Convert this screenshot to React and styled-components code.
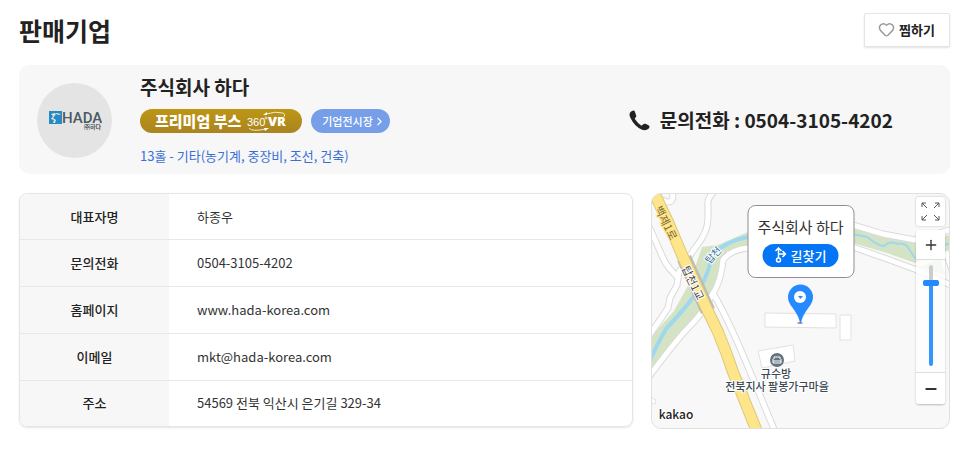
import React, { useState } from "react";
import styled, { createGlobalStyle } from "styled-components";
import { Heart, ChevronRight, Plus, Minus } from "lucide-react";

const GlobalStyle = createGlobalStyle`
   * {
      box-sizing: border-box;
   }
   body {
      margin: 0;
      background: #fff;
      color: #222;
      font-family: "Noto Sans CJK KR", "Noto Sans", sans-serif;
      font-size: 13px;
      line-height: 20px;
   }
   button {
      font-family: inherit;
      cursor: pointer;
   }
   a {
      text-decoration: none;
   }
`;

const Page = styled.main`
   padding: 13px 16px 20px 19px;
`;

const Header = styled.header`
   display: flex;
   align-items: flex-start;
   justify-content: space-between;
   margin-bottom: 18px;
`;

const Title = styled.h1`
   margin: 0;
   font-size: 25px;
   font-weight: 700;
   line-height: 34px;
`;

const WishButton = styled.button`
   display: flex;
   align-items: center;
   gap: 4px;
   height: 34px;
   padding: 0 14px 1px 13px;
   border: 1px solid #e5e5e5;
   border-radius: 2px;
   background: #fff;
   box-shadow: 0 1px 2px rgba(0, 0, 0, 0.12);
   color: #222;
   font-size: 13px;
   font-weight: 700;
`;

const CompanyCard = styled.section`
   display: flex;
   align-items: center;
   gap: 28px;
   padding: 8px 57px 7px 18px;
   margin-bottom: 19px;
   border-radius: 10px;
   background: #f7f7f7;
`;

const LogoCircle = styled.div`
   display: flex;
   align-items: center;
   justify-content: center;
   width: 75px;
   height: 75px;
   border-radius: 50%;
   background: #e4e4e4;
`;

const CompanyInfo = styled.div`
   flex: 1;
`;

const CompanyName = styled.h2`
   margin: 0 0 8px;
   font-size: 19px;
   font-weight: 700;
   line-height: 28px;
`;

const Badges = styled.div`
   display: flex;
   gap: 9px;
   margin-bottom: 12px;
`;

const Badge = styled.a`
   display: flex;
   align-items: center;
   height: 24px;
   border-radius: 12px;
   color: #fff;
`;

const PremiumBadge = styled(Badge)`
   gap: 6px;
   padding: 0 15px;
   background: linear-gradient(#bd9614, #aa8420);
   font-size: 15px;
   font-weight: 900;
`;

const HallBadge = styled(Badge)`
   padding: 0 4px 0 11px;
   background: #779fe9;
   font-size: 11px;
   font-weight: 500;
`;

const Category = styled.p`
   margin: 0;
   color: #3a70d6;
   line-height: 22px;
`;

const Phone = styled.a`
   display: flex;
   align-items: center;
   gap: 10px;
   color: #222;
   font-size: 19px;
   font-weight: 700;
   white-space: nowrap;
`;

const Details = styled.div`
   display: grid;
   grid-template-columns: 614fr 299fr;
   gap: 18px;
   align-items: start;
`;

const TableBox = styled.div`
   overflow: hidden;
   border: 1px solid #e5e5e5;
   border-radius: 8px;
   box-shadow: 0 1px 2px rgba(0, 0, 0, 0.1);
`;

const InfoTable = styled.table`
   width: 100%;
   height: 232px;
   border-collapse: collapse;

   tr + tr {
      border-top: 1px solid #e8e8e8;
   }
`;

const Label = styled.th`
   width: 149px;
   padding: 0;
   background: #f7f7f7;
   font-weight: 500;
`;

const Value = styled.td`
   padding: 0 28px;
   color: #333;
`;

const MapBox = styled.div`
   position: relative;
   height: 236px;
   overflow: hidden;
   border: 1px solid #e0e0e0;
   border-radius: 10px;
   background: #f8f8f8;
`;

const MapCanvas = styled.svg`
   display: block;
   width: 100%;
   height: 100%;
`;

const Popup = styled.div`
   position: absolute;
   top: 11px;
   left: 50%;
   transform: translateX(-50%);
   display: flex;
   flex-direction: column;
   align-items: center;
   gap: 6px;
   width: 107px;
   padding: 10px 0;
   border: 1px solid #8e8e8e;
   border-radius: 8px;
   background: #fff;
   color: #333;
   font-size: 15px;
   line-height: 22px;
   white-space: nowrap;
`;

const RouteButton = styled.button`
   display: flex;
   align-items: center;
   justify-content: center;
   gap: 4px;
   width: 76px;
   height: 23px;
   padding: 0 0 1px;
   border: 0;
   border-radius: 12px;
   background: #0475f4;
   color: #fff;
   font-size: 13px;
   font-weight: 500;
`;

const Controls = styled.div`
   position: absolute;
   top: 3px;
   right: 4px;
   display: flex;
   flex-direction: column;
   gap: 4px;
   width: 29px;
`;

const ControlButton = styled.button`
   display: flex;
   align-items: center;
   justify-content: center;
   width: 100%;
   height: ${(props) => props.$height || 29}px;
   padding: 0;
   border: 0;
   background: #fff;
   color: #333;
`;

const FullButton = styled(ControlButton)`
   border-radius: 2px;
   box-shadow: 0 0 2px rgba(0, 0, 0, 0.3);
`;

const ZoomPanel = styled.div`
   border-radius: 3px;
   overflow: hidden;
   box-shadow: 0 1px 2px rgba(0, 0, 0, 0.25);
`;

const SliderArea = styled.div`
   display: flex;
   justify-content: center;
   height: 114px;
   padding: 5px 0 6px;
   border-top: 1px solid #ddd;
   border-bottom: 1px solid #ddd;
   background: rgba(255, 255, 255, 0.75);
`;

const ZoomSlider = styled.input`
   appearance: none;
   writing-mode: vertical-lr;
   direction: rtl;
   width: 16px;
   height: 101px;
   margin: 0;
   background: transparent;

   &::-webkit-slider-runnable-track {
      width: 4px;
      border-radius: 2px;
      background: linear-gradient(#ccc 17%, #3396ff 17%);
   }
   &::-webkit-slider-thumb {
      appearance: none;
      width: 16px;
      height: 6px;
      margin-left: -6px;
      border-radius: 2px;
      background: #258aff;
   }
`;

const rows = [
   { label: "대표자명", value: "하종우" },
   { label: "문의전화", value: "0504-3105-4202" },
   { label: "홈페이지", value: "www.hada-korea.com" },
   { label: "이메일", value: "mkt@hada-korea.com" },
   { label: "주소", value: "54569 전북 익산시 은기길 329-34" },
];

const roads = [
   "M60 -4 V0 Q55 5 56 12 V24 C56 40 46 50 43 54 L27 78 L25 91 L18 104 L16 114 L10 123 L-4 143",
   "M-4 30 L11 64 Q16 75 28 85",
   "M20 -4 Q23 9 15 8 L5 4",
   "M96 54 Q78 56 71 66 Q69 88 60 101 Q53 117 37 133 C25 145 14 160 -4 184",
   "M60 98 Q69 111 88 154 L105 194 L124 240",
   "M96 31 L201 31 L231 40 L263 46 L301 35",
   "M201 53 L235 65 L265 76 L301 92",
   "M294 58 L301 79",
];

const highway = "M-3 -12L16 28L31 63L53 111L66 138Q74 157 81 178L106 240";

function HadaLogo() {
   return (
      <svg width="54" height="24" viewBox="0 0 54 24" role="img" aria-label="HADA">
         <path d="M1 3h13v13H1z" fill="#258bc2" />
         <path d="M3 6l4-1 1 1-3 4 3 2-1 3H5l1-3-3-1 2-3zM8 5l5 1-2 1-3-1z" fill="#e4e4e4" />
         <text x="14" y="15" fontSize="15" fontWeight="500" fontFamily="Roboto, sans-serif" fill="#4b5963">
            HADA
         </text>
         <text x="53" y="21" fontSize="6" fontWeight="700" textAnchor="end" fill="#4b5963">
            ㈜하다
         </text>
      </svg>
   );
}

function VrMark() {
   return (
      <svg width="40" height="22" viewBox="0 0 40 22" fill="#fff">
         <text x="0" y="16" fontSize="11" fontWeight="400" fontFamily="'Liberation Sans Narrow', 'Liberation Sans', sans-serif">
            360
         </text>
         <text x="21" y="16" fontSize="13" fontWeight="900" fontFamily="'Open Sans', sans-serif">
            VR
         </text>
         <circle cx="19" cy="8" r="1" fill="none" stroke="#fff" strokeWidth="0.7" />
         <path d="M19 4Q28 1 36 3Q39 4 37 7M2 18Q4 22 19 19" fill="none" stroke="#fff" strokeWidth="0.8" />
         <path d="M16 5l4-3v3zM17 18l5 0-4 3z" />
      </svg>
   );
}

function PhoneIcon() {
   return (
      <svg width="21" height="21" viewBox="0 0 21 21" fill="currentColor">
         <path d="M4.500 .5Q3 .5 1.500 2Q-.5 4 1.500 8Q5.500 16.500 13 19.700Q17 21 19.500 18.700Q21.500 16.500 19.500 15.300L16.500 13.800Q15 13.300 14 14.500L12.500 15.800Q8.500 13.200 5.700 8.800L6.800 7.200Q7.600 6.200 7 5L5.900 1.700Q5.500 .5 4.500 .5Z" />
      </svg>
   );
}

function MapDrawing() {
   return (
      <MapCanvas viewBox="0 0 297 234" preserveAspectRatio="xMidYMid slice">
         <path
            d="M50 53L66 51L96 38V54Q78 55 71 66Q70 85 61 99Q52 116 36 132L-2 176V144L22 117L38 88Z"
            fill="#d3e3c3"
         />
         <path d="M201 34L223 41L263 49L297 41V56L263 69L235 59L201 49Z" fill="#d3e3c3" />
         <path d="M268 73L288 64L293 81Z" fill="#d9e5ce" />
         <path d="M96 43Q74 47 60 61Q57 79 47 96Q32 116 14 135Q8 145 -2 166" fill="none" stroke="#9ed7ee" strokeWidth="4" />
         <path
            d="M201 40L215 43Q228 53 232 52Q238 46 246 50Q253 48 257 55L263 64L275 57L299 49"
            fill="none"
            stroke="#9ed7ee"
            strokeWidth="2"
         />
         {roads.map((d) => (
            <path key={d} d={d} fill="none" stroke="#dadada" strokeWidth="7" />
         ))}
         {roads.map((d) => (
            <path key={d} d={d} fill="none" stroke="#fff" strokeWidth="5" />
         ))}
         <path d="M32 64L56 117" stroke="#bbb" strokeWidth="15" />
         <path d={highway} fill="none" stroke="#dbc878" strokeWidth="12" />
         <path d={highway} fill="none" stroke="#ffe58a" strokeWidth="10" />
         <g fill="#fff" stroke="#e1e1e1">
            <path d="M113 119L184 120V134L113 133Z" />
            <path d="M188 121H199V146H188Z" />
            <path d="M106 157L141 151L143 167L110 174Z" />
            <path d="M-2 203L4 206L3 210L-3 208" />
         </g>
         <circle cx="125" cy="166" r="7" fill="#64737e" />
         <path
            d="M122 165v-2h6v2M121 165v4h8v-4M121 167h8"
            fill="none"
            stroke="#fff"
            strokeWidth="1"
            strokeLinejoin="round"
         />
         <g fill="#444" stroke="#fff" strokeWidth="2" paintOrder="stroke" textAnchor="middle" fontSize="11">
            <g transform="rotate(64 14 29)">
               <text x="14" y="33" fill="#7a6830" stroke="#ffe58a">
                  백제1로
               </text>
            </g>
            <g transform="rotate(64 41 89)">
               <text x="41" y="93">
                  탑천1교
               </text>
            </g>
            <g transform="rotate(-48 61 61)">
               <text x="61" y="65" fill="#31719b" fontSize="10">
                  탑천
               </text>
            </g>
            <g fill="#3d4a55" fontWeight="500">
               <text x="124" y="184">
                  규수방
               </text>
               <text x="125" y="197">
                  전북지사 팔봉가구마을
               </text>
            </g>
            <text x="24" y="225" fill="#222" fontSize="12" fontWeight="500">
               kakao
            </text>
         </g>
         <ellipse cx="148" cy="129" rx="3" ry="1" fill="#999" />
         <path d="M148 129Q147 122 140 113Q136 108 136 103A12 12 0 0 1 161 103Q161 108 157 113Q150 122 149 129Z" fill="#258aff" />
         <circle cx="148" cy="103" r="6" fill="#fff" />
         <path d="M146 102h5l-2.500 3z" fill="#258aff" />
      </MapCanvas>
   );
}

function App() {
   const [zoom, setZoom] = useState(12);

   return (
      <>
         <GlobalStyle />
         <Page>
            <Header>
               <Title>판매기업</Title>
               <WishButton type="button">
                  <Heart size={17} strokeWidth={2} color="#999" />
                  찜하기
               </WishButton>
            </Header>

            <CompanyCard>
               <LogoCircle>
                  <HadaLogo />
               </LogoCircle>
               <CompanyInfo>
                  <CompanyName>주식회사 하다</CompanyName>
                  <Badges>
                     <PremiumBadge href="#booth">
                        프리미엄 부스
                        <VrMark />
                     </PremiumBadge>
                     <HallBadge href="#hall">
                        기업전시장
                        <ChevronRight size={13} />
                     </HallBadge>
                  </Badges>
                  <Category>13홀 - 기타(농기계, 중장비, 조선, 건축)</Category>
               </CompanyInfo>
               <Phone href="tel:0504-3105-4202">
                  <PhoneIcon />
                  문의전화 : 0504-3105-4202
               </Phone>
            </CompanyCard>

            <Details>
               <TableBox>
                  <InfoTable>
                     <tbody>
                        {rows.map((row) => (
                           <tr key={row.label}>
                              <Label scope="row">{row.label}</Label>
                              <Value>{row.value}</Value>
                           </tr>
                        ))}
                     </tbody>
                  </InfoTable>
               </TableBox>

               <MapBox>
                  <MapDrawing />
                  <Popup>
                     주식회사 하다
                     <RouteButton type="button">
                        <svg width="12" height="16" viewBox="0 0 12 16" fill="none" stroke="#fff" strokeWidth="1.500">
                           <path d="M4 11V2M1 4l3-3 3 3M4 7h6M8 4l3 3-3 3" />
                           <circle cx="4" cy="13" r="2" />
                        </svg>
                        길찾기
                     </RouteButton>
                  </Popup>
                  <Controls>
                     <FullButton type="button" aria-label="전체화면">
                        <svg width="19" height="19" viewBox="0 0 19 19" fill="none" stroke="#555">
                           <path d="M1 5V1h4M1 1l5 5M14 1h4v4M18 1l-5 5M1 14v4h4M1 18l5-5M14 18h4v-4M18 18l-5-5" />
                        </svg>
                     </FullButton>
                     <ZoomPanel>
                        <ControlButton type="button" aria-label="확대" onClick={() => setZoom(Math.min(zoom + 1, 14))}>
                           <Plus size={16} />
                        </ControlButton>
                        <SliderArea>
                           <ZoomSlider
                              type="range"
                              min="1"
                              max="14"
                              value={zoom}
                              aria-label="지도 확대 수준"
                              onChange={(e) => setZoom(Number(e.target.value))}
                           />
                        </SliderArea>
                        <ControlButton
                           type="button"
                           $height={31}
                           aria-label="축소"
                           onClick={() => setZoom(Math.max(zoom - 1, 1))}
                        >
                           <Minus size={16} strokeWidth={3} />
                        </ControlButton>
                     </ZoomPanel>
                  </Controls>
               </MapBox>
            </Details>
         </Page>
      </>
   );
}

export default App;
